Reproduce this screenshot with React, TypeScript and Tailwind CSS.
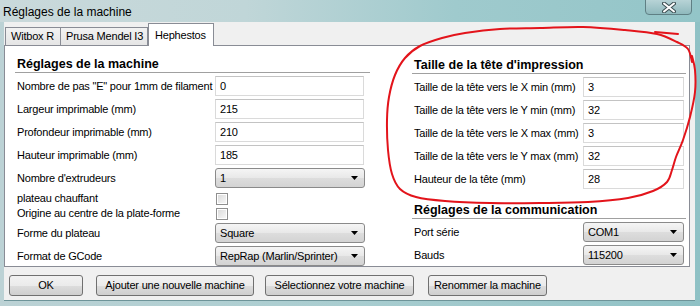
import React from "react";

// Win7-style "machine settings" dialog with a hand-drawn red annotation

const ui = "font-['Liberation_Sans',Arial,sans-serif]";
const txt = "text-[11px] tracking-[-0.2px] text-black whitespace-nowrap";

function TextBox({ value, width }: { value: string; width: string }) {
  return (
    <div
      className={`${width} ${txt} h-[20px] bg-white border border-[#dadada] border-t-[#c3c3c3] flex items-center pl-[4px]`}
    >
      {value}
    </div>
  );
}

function Combo({ value, width }: { value: string; width: string }) {
  return (
    <div
      className={`${width} ${txt} h-[20px] rounded-[3px] border border-[#8a8a8a] bg-[linear-gradient(#f5f5f5,#e8e8e8_50%,#dddddd_51%,#d3d3d3)] flex items-center justify-between pl-[4px] pr-[6px]`}
    >
      <span>{value}</span>
      <svg width="7" height="4" viewBox="0 0 7 4">
        <path d="M0 0 H7 L3.5 4 Z" fill="#000" />
      </svg>
    </div>
  );
}

function CheckBox() {
  return (
    <div className="w-[12px] h-[12px] border border-[#8f8f8f] bg-white p-[1px]">
      <div className="w-full h-full bg-[linear-gradient(135deg,#dcdcdc,#f6f6f6)]" />
    </div>
  );
}

function Header({ children }: { children: React.ReactNode }) {
  return (
    <div className="h-[19px] border-b border-[#a0a0a0] flex items-end pl-[2px] pb-[2px] text-[12.5px] font-bold text-black leading-none whitespace-nowrap">
      {children}
    </div>
  );
}

function Row({
  label,
  labelWidth,
  children,
}: {
  label: string;
  labelWidth: string;
  children: React.ReactNode;
}) {
  return (
    <div className="flex items-center h-[20px]">
      <div className={`${labelWidth} ${txt} pl-[2px]`}>{label}</div>
      {children}
    </div>
  );
}

function Button({ label, width }: { label: string; width: string }) {
  return (
    <div
      className={`${width} ${txt} h-[21px] rounded-[3px] border border-[#707070] bg-[linear-gradient(#f2f2f2,#ebebeb_50%,#dddddd_51%,#cfcfcf)] flex items-center justify-center`}
    >
      {label}
    </div>
  );
}

function Tab({ label, width, active }: { label: string; width: string; active?: boolean }) {
  if (active) {
    return (
      <div
        className={`${width} ${txt} h-[23px] -mb-[1px] relative z-10 bg-white border border-b-0 border-[#898c95] flex items-start pt-[3px] pl-[6px]`}
      >
        {label}
      </div>
    );
  }
  return (
    <div
      className={`${width} ${txt} h-[18px] bg-[linear-gradient(#f2f2f2,#e5e5e5)] border border-b-0 border-l-0 first:border-l border-[#898c95] flex items-center pl-[5px]`}
    >
      {label}
    </div>
  );
}

// smooth curve through the annotation points
function smooth(pts: number[][]) {
  let d = `M${pts[0][0]} ${pts[0][1]}`;
  for (let i = 0; i < pts.length - 1; i++) {
    const p0 = pts[i - 1] || pts[i];
    const p1 = pts[i];
    const p2 = pts[i + 1];
    const p3 = pts[i + 2] || p2;
    const c1 = [p1[0] + (p2[0] - p0[0]) / 6, p1[1] + (p2[1] - p0[1]) / 6];
    const c2 = [p2[0] - (p3[0] - p1[0]) / 6, p2[1] - (p3[1] - p1[1]) / 6];
    d += ` C${c1[0]} ${c1[1]} ${c2[0]} ${c2[1]} ${p2[0]} ${p2[1]}`;
  }
  return d;
}

const circle = [
  [692, 62], [688, 49], [677, 42], [657, 34], [625, 30], [583, 27], [540, 28],
  [500, 29], [465, 33], [442, 38], [420, 46], [405, 58], [395, 75], [389, 97],
  [387, 120], [388, 150], [392, 174], [400, 189], [416, 197], [445, 201],
  [490, 203], [540, 203], [588, 202], [628, 198], [653, 191], [667, 182],
  [672, 170], [676, 157], [683, 140], [690, 117], [695, 92], [695, 70], [692, 56],
];

export default function App() {
  return (
    <div className={`${ui} relative w-[700px] h-[306px] overflow-hidden bg-[linear-gradient(90deg,#bcd2d5,#a9cdd0_50%,#8fc1c5)] flex flex-col`}>
      {/* Title bar */}
      <div className="h-[22px] flex items-start justify-between bg-[linear-gradient(90deg,#cad9db_0%,#c0d6d8_35%,#9fcacd_65%,#93c5c8_100%)]">
        <div className="pl-[3px] pt-[3px] text-[12px] text-black">Réglages de la machine</div>
        <div className="mr-[8px] w-[47px] h-[16px] -mt-[1px] rounded-b-[4px] border border-[#5f7f84] bg-[linear-gradient(#b7d3d6,#8fb9bd)] flex items-center justify-center">
          <svg width="14" height="11" viewBox="0 0 14 11">
            <path d="M2 1.5 L12 9.5 M12 1.5 L2 9.5" stroke="#3d4f52" strokeWidth="4" strokeLinecap="round" />
            <path d="M2 1.5 L12 9.5 M12 1.5 L2 9.5" stroke="#ffffff" strokeWidth="2" strokeLinecap="round" />
          </svg>
        </div>
      </div>

      {/* Client area */}
      <div className="ml-[4px] mr-[5px] h-[279px] bg-[#f0f0f0] border-b border-[#6e9499] pt-[1px]">
        {/* Tabs */}
        <div className="flex items-end h-[22px] pl-[1px]">
          <Tab label="Witbox R" width="w-[56px]" />
          <Tab label="Prusa Mendel I3" width="w-[87px]" />
          <Tab label="Hephestos" width="w-[66px]" active />
        </div>

        {/* Tab page */}
        <div className="w-[686px] h-[222px] bg-white border border-[#898c95] pt-[9px] pl-[10px] flex gap-[42px]">
          {/* Left column */}
          <div className="w-[355px] flex flex-col">
            <Header>Réglages de la machine</Header>
            <div className="mt-[3px] flex flex-col gap-[3px]">
              <Row label={'Nombre de pas "E" pour 1mm de filament'} labelWidth="w-[200px]">
                <TextBox value="0" width="w-[149px]" />
              </Row>
              <Row label="Largeur imprimable (mm)" labelWidth="w-[200px]">
                <TextBox value="215" width="w-[149px]" />
              </Row>
              <Row label="Profondeur imprimable (mm)" labelWidth="w-[200px]">
                <TextBox value="210" width="w-[149px]" />
              </Row>
              <Row label="Hauteur imprimable (mm)" labelWidth="w-[200px]">
                <TextBox value="185" width="w-[149px]" />
              </Row>
              <Row label="Nombre d'extrudeurs" labelWidth="w-[200px]">
                <Combo value="1" width="w-[150px]" />
              </Row>
            </div>
            <div className="mt-[3px] flex flex-col">
              <div className="flex items-center h-[15px]">
                <div className={`w-[201px] ${txt} pl-[2px] leading-none`}>plateau chauffant</div>
                <CheckBox />
              </div>
              <div className="flex items-center h-[15px]">
                <div className={`w-[201px] ${txt} pl-[2px] leading-none`}>Origine au centre de la plate-forme</div>
                <CheckBox />
              </div>
            </div>
            <div className="mt-[2px] flex flex-col gap-[3px]">
              <Row label="Forme du plateau" labelWidth="w-[200px]">
                <Combo value="Square" width="w-[150px]" />
              </Row>
              <Row label="Format de GCode" labelWidth="w-[200px]">
                <Combo value="RepRap (Marlin/Sprinter)" width="w-[150px]" />
              </Row>
            </div>
          </div>

          {/* Right column */}
          <div className="w-[274px] flex flex-col">
            <Header>Taille de la tête d'impression</Header>
            <div className="mt-[3px] flex flex-col gap-[3px]">
              <Row label="Taille de la tête vers le X min (mm)" labelWidth="w-[171px]">
                <TextBox value="3" width="w-[101px]" />
              </Row>
              <Row label="Taille de la tête vers le Y min (mm)" labelWidth="w-[171px]">
                <TextBox value="32" width="w-[101px]" />
              </Row>
              <Row label="Taille de la tête vers le X max (mm)" labelWidth="w-[171px]">
                <TextBox value="3" width="w-[101px]" />
              </Row>
              <Row label="Taille de la tête vers le Y max (mm)" labelWidth="w-[171px]">
                <TextBox value="32" width="w-[101px]" />
              </Row>
              <Row label="Hauteur de la tête (mm)" labelWidth="w-[171px]">
                <TextBox value="28" width="w-[101px]" />
              </Row>
            </div>
            <div className="mt-[11px]">
              <Header>Réglages de la communication</Header>
            </div>
            <div className="mt-[3px] flex flex-col gap-[3px]">
              <Row label="Port série" labelWidth="w-[171px]">
                <Combo value="COM1" width="w-[101px]" />
              </Row>
              <Row label="Bauds" labelWidth="w-[171px]">
                <Combo value="115200" width="w-[101px]" />
              </Row>
            </div>
          </div>
        </div>

        {/* Buttons */}
        <div className="mt-[8px] pl-[5px] flex">
          <Button label="OK" width="w-[74px]" />
          <div className="ml-[13px]">
            <Button label="Ajouter une nouvelle machine" width="w-[158px]" />
          </div>
          <div className="ml-[11px]">
            <Button label="Sélectionnez votre machine" width="w-[149px]" />
          </div>
          <div className="ml-[14px]">
            <Button label="Renommer la machine" width="w-[119px]" />
          </div>
        </div>
      </div>

      {/* Red hand-drawn annotation */}
      <svg className="absolute left-0 top-0 pointer-events-none" width="700" height="306" viewBox="0 0 700 306">
        <path d={smooth(circle)} fill="none" stroke="#e3141b" strokeWidth="2" strokeLinecap="round" strokeLinejoin="round" />
        <path d="M655 32 Q666 33 678 34" fill="none" stroke="#e3141b" strokeWidth="2" strokeLinecap="round" />
      </svg>
    </div>
  );
}
